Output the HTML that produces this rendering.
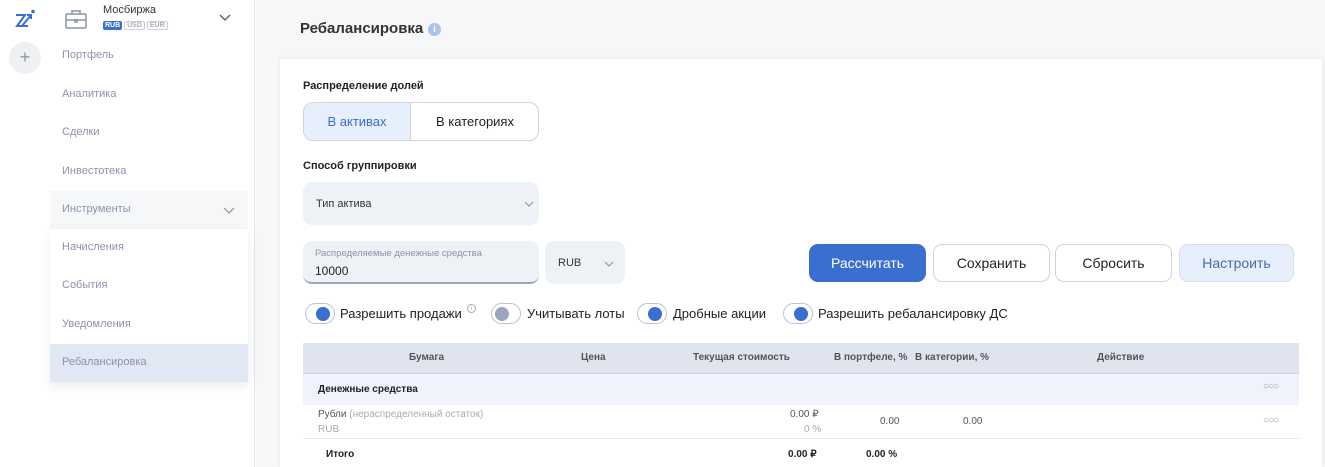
<!DOCTYPE html>
<html><head><meta charset="utf-8"><style>
*{box-sizing:border-box;margin:0;padding:0}
html{width:1325px;height:467px;overflow:hidden}
body{width:1325px;height:467px;overflow:hidden;background:#f6f7f9;font-family:"Liberation Sans",sans-serif;position:relative;color:#222}
.a{position:absolute}
.nav{font-size:11px;color:#8a93a8;left:62px}
.btn{position:absolute;top:244px;height:38px;border-radius:9px;border:1px solid #cfd3da;background:#fff;font-size:14px;text-align:center;line-height:36px;color:#222}
.tg{position:absolute;top:303px;width:30px;height:21px;border-radius:11px;border:1px solid #b9c3d4;background:#fff}
.tg i{position:absolute;top:3px;left:10px;width:14px;height:14px;border-radius:50%;background:#3a6fcf}
.tl{position:absolute;top:306px;font-size:13px;color:#222}
.th{position:absolute;top:352px;font-size:10px;font-weight:bold;color:#555}
</style></head><body>
<div class="a" style="left:0;top:0;width:255px;height:467px;background:#fff;border-right:1px solid #e6e8ec"></div>
<svg class="a" style="left:14px;top:9px" width="24" height="22" viewBox="0 0 24 22"><path d="M2 6h9L3 17h11M8 17l9-11M13 6h4v4" stroke="#3a6fcf" stroke-width="2" fill="none"/><circle cx="19" cy="2.5" r="1.8" fill="#3a6fcf"/></svg>
<div class="a" style="left:9px;top:42px;width:32px;height:32px;border-radius:50%;background:#eef0f3;color:#8a93a8;font-size:18px;text-align:center;line-height:31px">+</div>
<svg class="a" style="left:65px;top:9px" width="22" height="20" viewBox="0 0 22 20"><rect x="1" y="5" width="20" height="14" rx="1" stroke="#8a93a8" stroke-width="1.5" fill="none"/><path d="M7 5V2h8v3M1 11h20M10 10v3h2v-3" stroke="#8a93a8" stroke-width="1.5" fill="none"/></svg>
<div class="a" style="left:103px;top:4px;font-size:11px;color:#333">Мосбиржа</div>
<div class="a" style="left:103px;top:22px;font-size:7px;font-weight:bold">
<span style="background:#3a6fcf;color:#fff;padding:1px 2px;border-radius:2px">RUB</span>
<span style="border:1px solid #ccd;color:#aab;padding:0 2px;border-radius:2px">USD</span>
<span style="border:1px solid #ccd;color:#aab;padding:0 2px;border-radius:2px">EUR</span></div>
<svg class="a" style="left:219px;top:14px" width="12" height="8"><path d="M1 1l5 5 5-5" stroke="#666" stroke-width="1.5" fill="none"/></svg>
<div class="a nav" style="top:49px">Портфель</div>
<div class="a nav" style="top:88px">Аналитика</div>
<div class="a nav" style="top:126px">Сделки</div>
<div class="a nav" style="top:165px">Инвестотека</div>
<div class="a" style="left:50px;top:191px;width:198px;height:38px;background:#f6f7f9"></div>
<div class="a nav" style="top:203px">Инструменты</div>
<svg class="a" style="left:223px;top:207px" width="12" height="8"><path d="M1 1l5 5 5-5" stroke="#999" stroke-width="1.3" fill="none"/></svg>
<div class="a" style="left:50px;top:229px;width:198px;height:153px;background:#fff;box-shadow:0 4px 10px rgba(0,0,0,.08)"></div>
<div class="a" style="left:50px;top:344px;width:198px;height:38px;background:#e1e8f4"></div>
<div class="a nav" style="top:241px">Начисления</div>
<div class="a nav" style="top:279px">События</div>
<div class="a nav" style="top:318px">Уведомления</div>
<div class="a nav" style="top:356px">Ребалансировка</div>

<div class="a" style="left:300px;top:20px;font-size:15px;font-weight:bold;color:#333">Ребалансировка</div>
<div class="a" style="left:428px;top:23px;width:13px;height:13px;border-radius:50%;background:#a9c2ee;color:#fff;font-size:9px;text-align:center;line-height:13px;font-weight:bold">i</div>
<div class="a" style="left:280px;top:59px;width:1042px;height:408px;background:#fff;box-shadow:0 0 4px rgba(0,0,0,.08)"></div>
<div class="a" style="left:303px;top:80px;font-size:11px;font-weight:bold">Распределение долей</div>
<div class="a" style="left:303px;top:102px;width:236px;height:39px;border:1px solid #cfd3da;border-radius:10px;overflow:hidden;font-size:13px">
<div class="a" style="left:0;top:0;width:107px;height:37px;background:#e7effc;border-right:1px solid #cfd3da;color:#3a6fcf;text-align:center;line-height:37px">В активах</div>
<div class="a" style="left:107px;top:0;width:128px;height:37px;text-align:center;line-height:37px">В категориях</div></div>
<div class="a" style="left:303px;top:160px;font-size:11px;font-weight:bold">Способ группировки</div>
<div class="a" style="left:303px;top:182px;width:236px;height:43px;background:#eef1f6;border-radius:9px;font-size:11px;padding:16px 0 0 13px;color:#333">Тип актива</div>
<svg class="a" style="left:524px;top:201px" width="10" height="6"><path d="M1 1l4 4 4-4" stroke="#999" stroke-width="1.2" fill="none"/></svg>
<div class="a" style="left:303px;top:241px;width:236px;height:43px;background:#eef1f6;border-radius:9px;border-bottom:2px solid #9aa6bb"></div>
<div class="a" style="left:315px;top:248px;font-size:9.5px;color:#8a93a8">Распределяемые денежные средства</div>
<div class="a" style="left:315px;top:264px;font-size:12px;color:#222">10000</div>
<div class="a" style="left:545px;top:241px;width:80px;height:43px;background:#eef1f6;border-radius:9px;font-size:11px;padding:16px 0 0 13px;color:#333">RUB</div>
<svg class="a" style="left:604px;top:261px" width="10" height="6"><path d="M1 1l4 4 4-4" stroke="#999" stroke-width="1.2" fill="none"/></svg>
<div class="btn" style="left:809px;width:117px;background:#3a6fcf;border-color:#3a6fcf;color:#fff">Рассчитать</div>
<div class="btn" style="left:933px;width:117px">Сохранить</div>
<div class="btn" style="left:1055px;width:117px">Сбросить</div>
<div class="btn" style="left:1179px;width:115px;background:#e7effc;border-color:#d3def0;color:#4a6aa8">Настроить</div>

<div class="tg" style="left:305px"><i></i></div><div class="tl" style="left:340px">Разрешить продажи</div>
<div class="a" style="left:467px;top:304px;width:9px;height:9px;border:1px solid #aaa;border-radius:50%;font-size:6px;color:#aaa;text-align:center;line-height:8px">i</div>
<div class="tg" style="left:491px"><i style="left:3px;background:#9aa6bb"></i></div><div class="tl" style="left:527px">Учитывать лоты</div>
<div class="tg" style="left:637px"><i></i></div><div class="tl" style="left:673px">Дробные акции</div>
<div class="tg" style="left:783px"><i></i></div><div class="tl" style="left:818px">Разрешить ребалансировку ДС</div>

<div class="a" style="left:303px;top:343px;width:996px;height:31px;background:#dfe4ee;border-bottom:1px solid #c9d0dc"></div>
<div class="th" style="left:409px">Бумага</div>
<div class="th" style="left:581px">Цена</div>
<div class="th" style="left:693px">Текущая стоимость</div>
<div class="th" style="left:834px">В портфеле, %</div>
<div class="th" style="left:915px">В категории, %</div>
<div class="th" style="left:1097px">Действие</div>
<div class="a" style="left:303px;top:374px;width:996px;height:31px;background:#eef3fc"></div>
<div class="a" style="left:318px;top:384px;font-size:10px;font-weight:bold">Денежные средства</div>
<div class="a" style="left:1263px;top:381px;font-size:10px;color:#999;letter-spacing:-1px">○○○</div>
<div class="a" style="left:318px;top:409px;font-size:10px;color:#555">Рубли <span style="color:#aaa">(нераспределенный остаток)</span></div>
<div class="a" style="left:318px;top:424px;font-size:10px;color:#aaa">RUB</div>
<div class="a" style="left:790px;top:409px;font-size:10px;color:#555">0.00 ₽</div>
<div class="a" style="left:804px;top:424px;font-size:10px;color:#aaa">0 %</div>
<div class="a" style="left:880px;top:416px;font-size:10px;color:#555">0.00</div>
<div class="a" style="left:963px;top:416px;font-size:10px;color:#555">0.00</div>
<div class="a" style="left:1263px;top:415px;font-size:10px;color:#999;letter-spacing:-1px">○○○</div>
<div class="a" style="left:303px;top:438px;width:996px;height:1px;background:#e3e6eb"></div>
<div class="a" style="left:326px;top:449px;font-size:10px;font-weight:bold">Итого</div>
<div class="a" style="left:788px;top:449px;font-size:10px;font-weight:bold">0.00 ₽</div>
<div class="a" style="left:866px;top:449px;font-size:10px;font-weight:bold">0.00 %</div>
</body></html>
